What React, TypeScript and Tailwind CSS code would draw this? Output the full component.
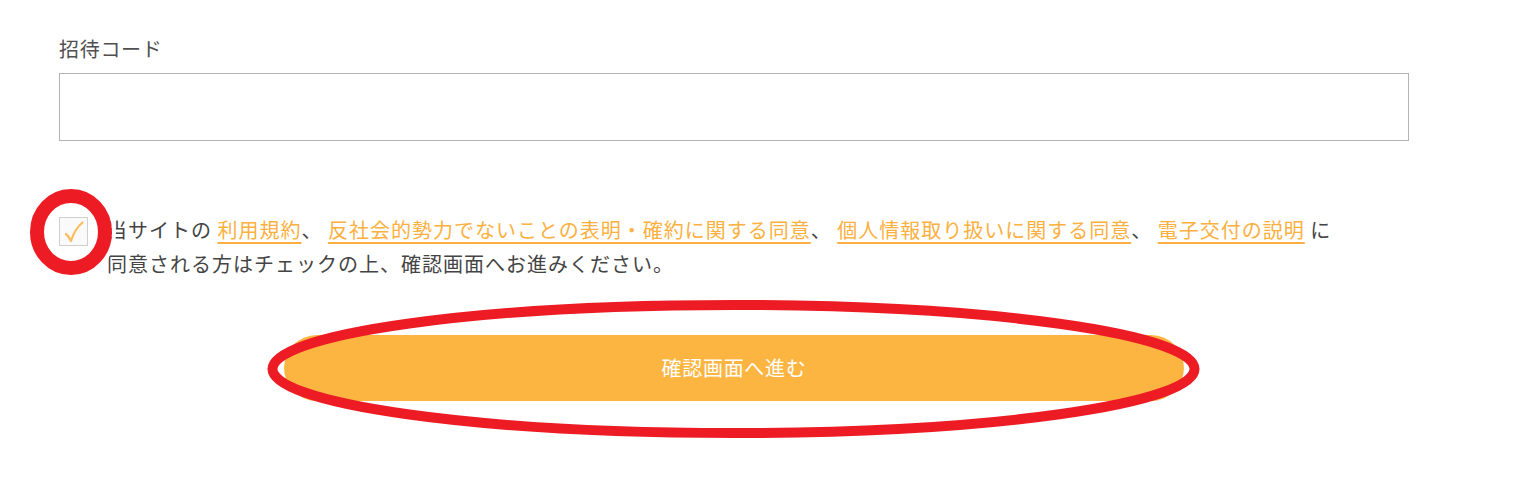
import React from "react";

const linkCls =
  "text-[#fbb040] underline decoration-[#fbb040] decoration-2 underline-offset-[4px]";

export default function App() {
  return (
    <div
      className="relative w-[1515px] h-[484px] bg-white overflow-hidden text-[#444444]"
      style={{ fontFamily: '"Noto Sans CJK JP", "Noto Sans", sans-serif' }}
    >
      <div className="pt-[34px] px-[59px] w-[1468px]">
        <div className="text-[20px] leading-[30px] tracking-[0.7px] text-[#505050]">招待コード</div>
        <input
          type="text"
          className="mt-[9px] block h-[68px] w-[1350px] border border-[#b3b3b3] bg-white outline-none"
        />
        <div className="mt-[72px] flex items-start gap-[19px]">
          <div className="mt-[4px] w-[29px] h-[29px] shrink-0 border border-[#cfcfcf] bg-[#fafafa] flex items-center justify-center">
            <svg width="22" height="22" viewBox="0 0 22 22">
              <path
                d="M3 13 C5 14.5 6.5 17 8 20 C10.5 12 14 6 19.5 1.5"
                fill="none"
                stroke="#fbb040"
                strokeOpacity="0.85"
                strokeWidth="2.2"
                strokeLinecap="round"
                strokeLinejoin="round"
              />
            </svg>
          </div>
          <p className="text-[20px] leading-[34px] tracking-[1px] w-[1260px]">
            当サイトの <span className={linkCls}>利用規約</span>、{" "}
            <span className={linkCls}>反社会的勢力でないことの表明・確約に関する同意</span>、{" "}
            <span className={linkCls}>個人情報取り扱いに関する同意</span>、{" "}
            <span className={linkCls}>電子交付の説明</span> に
            <br />
            同意される方はチェックの上、確認画面へお進みください。
          </p>
        </div>
        <div className="mt-[54px] flex justify-center">
          <button className="w-[900px] h-[66px] rounded-full bg-[#fdb542] text-white text-[20px] tracking-[0.7px]">
            確認画面へ進む
          </button>
        </div>
      </div>

      <svg
        className="absolute left-0 top-0 pointer-events-none"
        width="1515"
        height="484"
        viewBox="0 0 1515 484"
      >
        <ellipse cx="71" cy="232" rx="43" ry="45" fill="none" stroke="#ffffff" strokeWidth="4" />
        <ellipse cx="71" cy="232" rx="34" ry="36" fill="none" stroke="#ed1c24" strokeWidth="14" />
        <ellipse cx="733.5" cy="369" rx="461" ry="64" fill="none" stroke="#ed1c24" strokeWidth="10" />
      </svg>
    </div>
  );
}
